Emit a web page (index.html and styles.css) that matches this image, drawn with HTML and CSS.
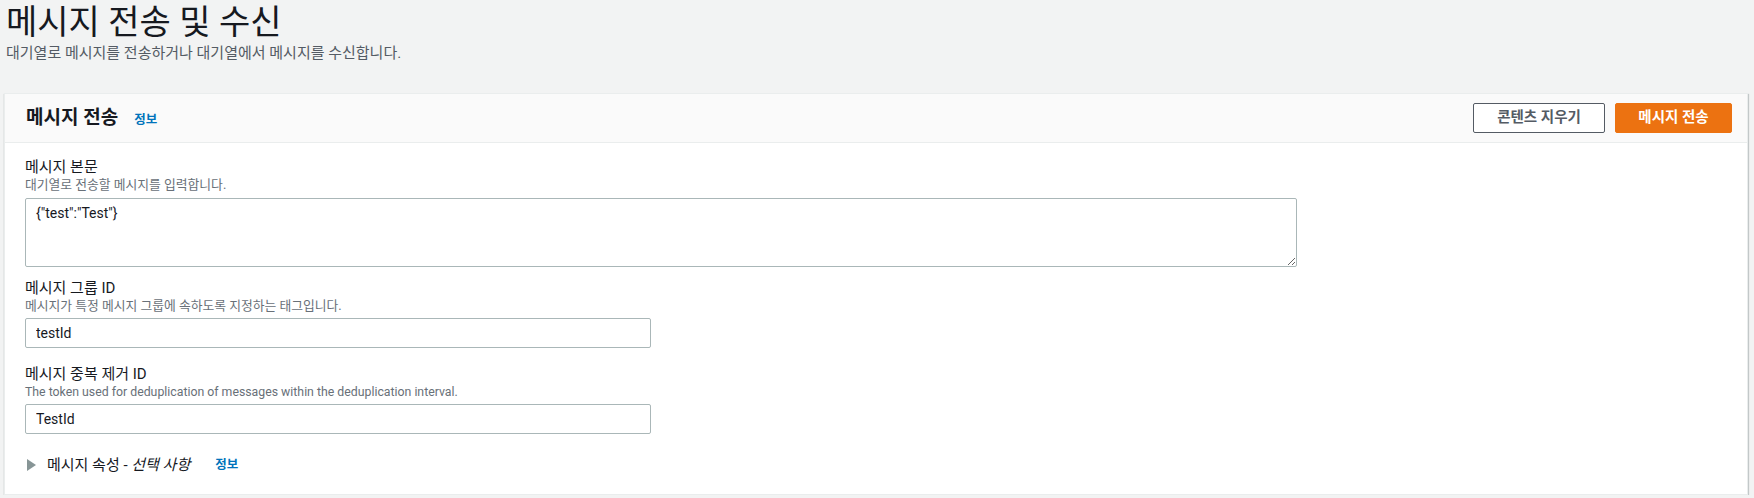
FILE: index.html
```html
<!DOCTYPE html>
<html lang="ko">
<head>
<meta charset="utf-8">
<title>메시지 전송 및 수신</title>
<link rel="stylesheet" href="styles.css">
</head>
<body>
<div class="page">
  <header class="page-head">
    <h1 class="page-title">메시지 전송 및 수신</h1>
    <p class="page-desc">대기열로 메시지를 전송하거나 대기열에서 메시지를 수신합니다.</p>
  </header>

  <section class="panel">
    <div class="panel-head">
      <div class="panel-title-wrap">
        <h2 class="panel-title">메시지 전송</h2>
        <a class="info-link" href="#">정보</a>
      </div>
      <div class="actions">
        <button class="btn btn-normal" type="button">콘텐츠 지우기</button>
        <button class="btn btn-primary" type="button">메시지 전송</button>
      </div>
    </div>
    <div class="panel-body">
      <div class="field field-first">
        <label class="field-label">메시지 본문</label>
        <div class="field-desc">대기열로 전송할 메시지를 입력합니다.</div>
        <textarea class="textarea" readonly>{"test":"Test"}</textarea>
      </div>
      <div class="field">
        <label class="field-label">메시지 그룹 ID</label>
        <div class="field-desc">메시지가 특정 메시지 그룹에 속하도록 지정하는 태그입니다.</div>
        <input class="input" type="text" value="testId" readonly>
      </div>
      <div class="field">
        <label class="field-label">메시지 중복 제거 ID</label>
        <div class="field-desc field-desc-latin">The token used for deduplication of messages within the deduplication interval.</div>
        <input class="input" type="text" value="TestId" readonly>
      </div>
      <div class="expander">
        <svg class="caret" width="9" height="12" viewBox="0 0 9 12" aria-hidden="true"><path d="M0 0 L9 6 L0 12 Z" fill="#879596"/></svg>
        <span class="expander-text">메시지 속성 - <em>선택 사항</em></span>
        <a class="info-link" href="#">정보</a>
      </div>
    </div>
  </section>
</div>
</body>
</html>
```

FILE: styles.css
```css
* { box-sizing: border-box; }

html, body {
  margin: 0;
  padding: 0;
  background: #f2f3f3;
}

body {
  font-family: Roboto, "Noto Sans CJK KR", sans-serif;
  color: #16191f;
  font-size: 14px;
  line-height: 20px;
}

.page {
  padding: 0 6px 0 4px;
}

.page-head {
  padding: 2px 0 0 2px;
  height: 93px;
}

.page-title {
  margin: 0;
  font-size: 34px;
  line-height: 40px;
  font-weight: 400;
  color: #16191f;
}

.page-desc {
  margin: 1px 0 0;
  font-size: 15px;
  line-height: 20px;
  color: #545b64;
}

.panel {
  background: #fff;
  border: 1px solid #eaeded;
  box-shadow: 0 1px 1px 0 rgba(0, 28, 36, 0.3), 1px 1px 1px 0 rgba(0, 28, 36, 0.15);
}

.panel-head {
  display: flex;
  align-items: center;
  justify-content: space-between;
  height: 49px;
  padding: 0 15px 0 21px;
  background: #fafafa;
  border-bottom: 1px solid #eaeded;
}

.panel-title-wrap {
  display: flex;
  align-items: baseline;
  gap: 16px;
}

.panel-title {
  margin: 0;
  font-size: 19px;
  line-height: 24px;
  font-weight: 700;
}

.info-link {
  font-size: 12.5px;
  font-weight: 700;
  color: #0073bb;
  text-decoration: none;
}

.actions {
  display: flex;
  gap: 10px;
}

.btn {
  height: 30px;
  font-family: inherit;
  font-size: 14.5px;
  font-weight: 700;
  border-radius: 2px;
  padding: 0;
  cursor: pointer;
  line-height: 28px;
}

.btn-normal {
  width: 132px;
  background: #fff;
  color: #545b64;
  border: 1px solid #545b64;
}

.btn-primary {
  width: 117px;
  background: #ec7211;
  color: #fff;
  border: 1px solid #ec7211;
}

.panel-body {
  padding: 14px 20px 19px 20px;
  display: flex;
  flex-direction: column;
}

.field {
  display: flex;
  flex-direction: column;
  margin-bottom: 16px;
}

.field-first {
  margin-bottom: 11px;
}

.field-label {
  font-size: 15px;
  line-height: 20px;
  color: #16191f;
}

.field-desc {
  font-size: 12.8px;
  line-height: 16px;
  color: #687078;
  margin-bottom: 4px;
}

.field-desc-latin {
  font-size: 12.3px;
}

.field-first .field-desc {
  margin-bottom: 5px;
}

.textarea {
  display: block;
  width: 1272px;
  height: 69px;
  border: 1px solid #aab7b8;
  border-radius: 2px;
  padding: 4px 10px;
  font-family: Roboto, "Noto Sans CJK KR", sans-serif;
  font-size: 14px;
  line-height: 20px;
  color: #16191f;
  resize: vertical;
  outline: none;
}

.input {
  display: block;
  width: 626px;
  height: 30px;
  border: 1px solid #aab7b8;
  border-radius: 2px;
  padding: 0 10px;
  font-family: Roboto, "Noto Sans CJK KR", sans-serif;
  font-size: 14px;
  color: #16191f;
  outline: none;
}

.expander {
  display: flex;
  align-items: center;
  margin-top: 5px;
  padding-left: 2px;
  height: 20px;
}

.caret {
  display: block;
  margin-right: 11px;
}

.expander-text {
  font-size: 15px;
  line-height: 20px;
  color: #16191f;
  margin-right: 25px;
}

.expander-text em {
  font-style: italic;
}
```
